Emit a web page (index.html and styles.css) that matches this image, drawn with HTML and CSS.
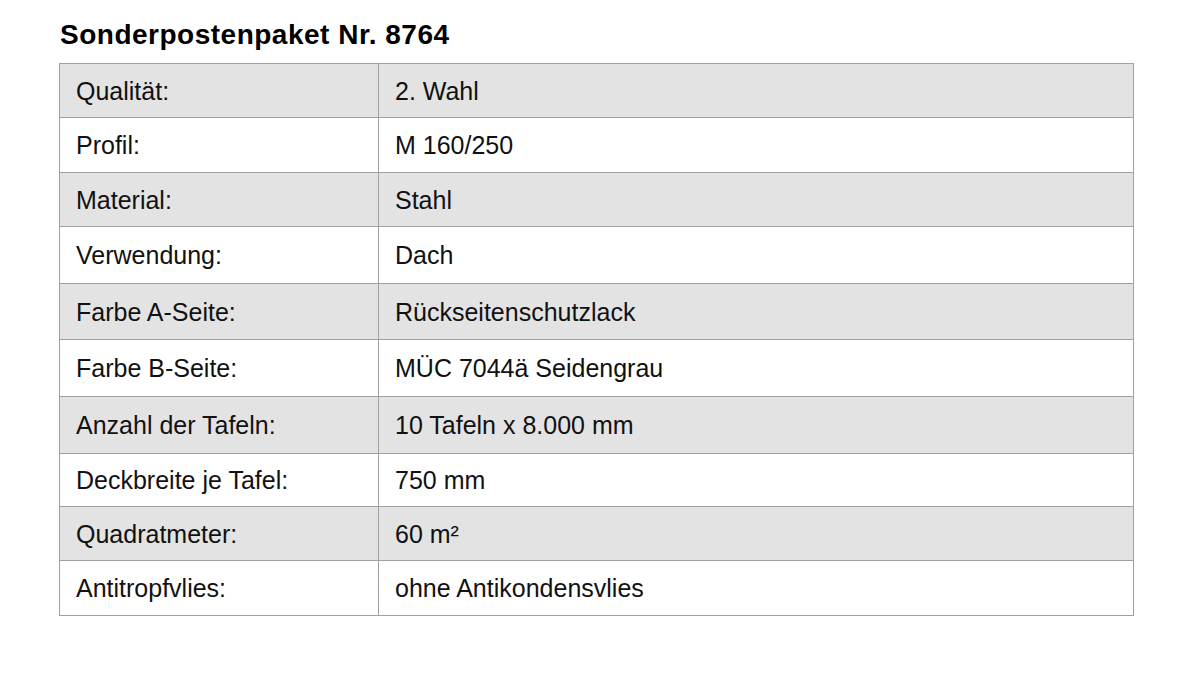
FILE: index.html
```html
<!DOCTYPE html>
<html lang="de">
<head>
<meta charset="utf-8">
<title>Sonderpostenpaket Nr. 8764</title>
<link rel="stylesheet" href="styles.css">
</head>
<body>
<div class="page">
  <h1 class="title">Sonderpostenpaket Nr. 8764</h1>
  <table class="spec">
    <tbody>
      <tr class="r1 alt"><td class="k">Qualität:</td><td class="v">2. Wahl</td></tr>
      <tr class="r2"><td class="k">Profil:</td><td class="v">M 160/250</td></tr>
      <tr class="r3 alt"><td class="k">Material:</td><td class="v">Stahl</td></tr>
      <tr class="r4"><td class="k">Verwendung:</td><td class="v">Dach</td></tr>
      <tr class="r5 alt"><td class="k">Farbe A-Seite:</td><td class="v">Rückseitenschutzlack</td></tr>
      <tr class="r6"><td class="k">Farbe B-Seite:</td><td class="v">MÜC 7044ä Seidengrau</td></tr>
      <tr class="r7 alt"><td class="k">Anzahl der Tafeln:</td><td class="v">10 Tafeln x 8.000 mm</td></tr>
      <tr class="r8"><td class="k">Deckbreite je Tafel:</td><td class="v">750 mm</td></tr>
      <tr class="r9 alt"><td class="k">Quadratmeter:</td><td class="v">60 m²</td></tr>
      <tr class="r10"><td class="k">Antitropfvlies:</td><td class="v">ohne Antikondensvlies</td></tr>
    </tbody>
  </table>
</div>
</body>
</html>
```
FILE: styles.css
```css
html, body {
  margin: 0;
  padding: 0;
  background: #ffffff;
}
body {
  font-family: "Liberation Sans", Arial, sans-serif;
  color: #111111;
}
.page {
  padding: 18px 0 0 59px;
  width: 1075px;
}
.title {
  margin: 0 0 12px 1px;
  font-size: 28px;
  letter-spacing: 0.5px;
  font-weight: bold;
  line-height: 33px;
  color: #000;
}
.spec {
  width: 1075px;
  border-collapse: collapse;
  font-size: 25px;
}
.spec td {
  border: 1px solid #a0a0a0;
  padding: 0 0 0 16px;
  vertical-align: middle;
  line-height: 28px;
}
.spec td.k {
  width: 302px;
}
.spec tr.alt td {
  background: #e3e3e3;
}
.r1 { height: 54px; }
.r2 { height: 55px; }
.r3 { height: 54px; }
.r4 { height: 57px; }
.r5 { height: 56px; }
.r6 { height: 57px; }
.r7 { height: 57px; }
.r8 { height: 53px; }
.r9 { height: 54px; }
.r10 { height: 55px; }
```
